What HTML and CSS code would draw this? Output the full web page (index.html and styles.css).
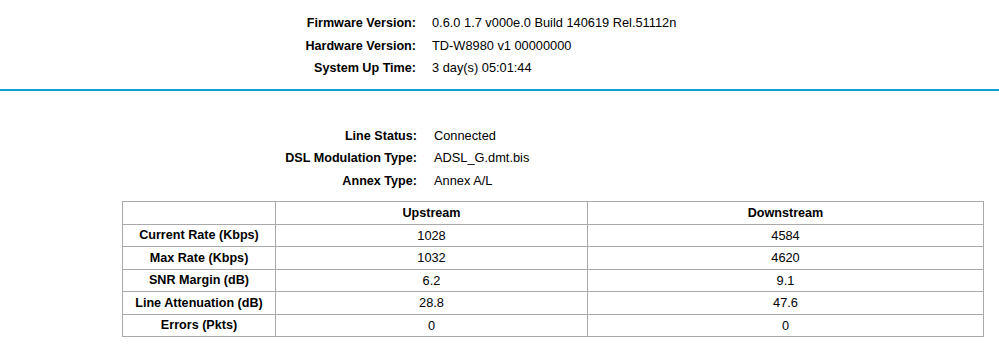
FILE: index.html
```html
<!DOCTYPE html>
<html>
<head>
<meta charset="utf-8">
<link rel="stylesheet" href="styles.css">
</head>
<body>
<div class="info info-top">
  <div class="lbl">Firmware Version:</div><div class="val">0.6.0 1.7 v000e.0 Build 140619 Rel.51112n</div>
  <div class="lbl">Hardware Version:</div><div class="val">TD-W8980 v1 00000000</div>
  <div class="lbl">System Up Time:</div><div class="val">3 day(s) 05:01:44</div>
</div>
<div class="rule"></div>
<div class="info info-dsl">
  <div class="lbl">Line Status:</div><div class="val">Connected</div>
  <div class="lbl">DSL Modulation Type:</div><div class="val">ADSL_G.dmt.bis</div>
  <div class="lbl">Annex Type:</div><div class="val">Annex A/L</div>
</div>
<table class="stats">
  <colgroup><col class="c1"><col class="c2"><col class="c3"></colgroup>
  <tr><th></th><th>Upstream</th><th>Downstream</th></tr>
  <tr><th>Current Rate (Kbps)</th><td>1028</td><td>4584</td></tr>
  <tr><th>Max Rate (Kbps)</th><td>1032</td><td>4620</td></tr>
  <tr><th>SNR Margin (dB)</th><td>6.2</td><td>9.1</td></tr>
  <tr><th>Line Attenuation (dB)</th><td>28.8</td><td>47.6</td></tr>
  <tr><th>Errors (Pkts)</th><td>0</td><td>0</td></tr>
</table>
</body>
</html>
```
FILE: styles.css
```css
html, body {
  margin: 0;
  padding: 0;
  background: #fff;
}
body {
  font-family: "Liberation Sans", Arial, Helvetica, sans-serif;
  font-size: 12.8px;
  color: #000;
}
.info {
  display: grid;
  line-height: 22.5px;
}
.info-top {
  grid-template-columns: 416px auto;
  column-gap: 16px;
  padding-top: 12px;
}
.info-dsl {
  grid-template-columns: 417px auto;
  column-gap: 17px;
  padding-top: 34px;
}
.lbl {
  font-weight: bold;
  font-size: 12.6px;
  text-align: right;
  white-space: nowrap;
}
.val {
  white-space: nowrap;
}
.rule {
  margin-top: 9px;
  height: 0;
  border-top: 2px solid #119fd7;
}
.stats {
  margin: 9px 0 0 122px;
  width: 861px;
  border-collapse: collapse;
  table-layout: fixed;
}
.stats .c1 { width: 153px; }
.stats .c2 { width: 312px; }
.stats .c3 { width: 396px; }
.stats th, .stats td {
  border: 1px solid #a9a9a9;
  height: 21.5px;
  padding: 0;
  text-align: center;
  vertical-align: middle;
  font-size: 12.8px;
  white-space: nowrap;
}
.stats th { font-weight: bold; font-size: 12.6px; }
.stats td { font-weight: normal; }
```
